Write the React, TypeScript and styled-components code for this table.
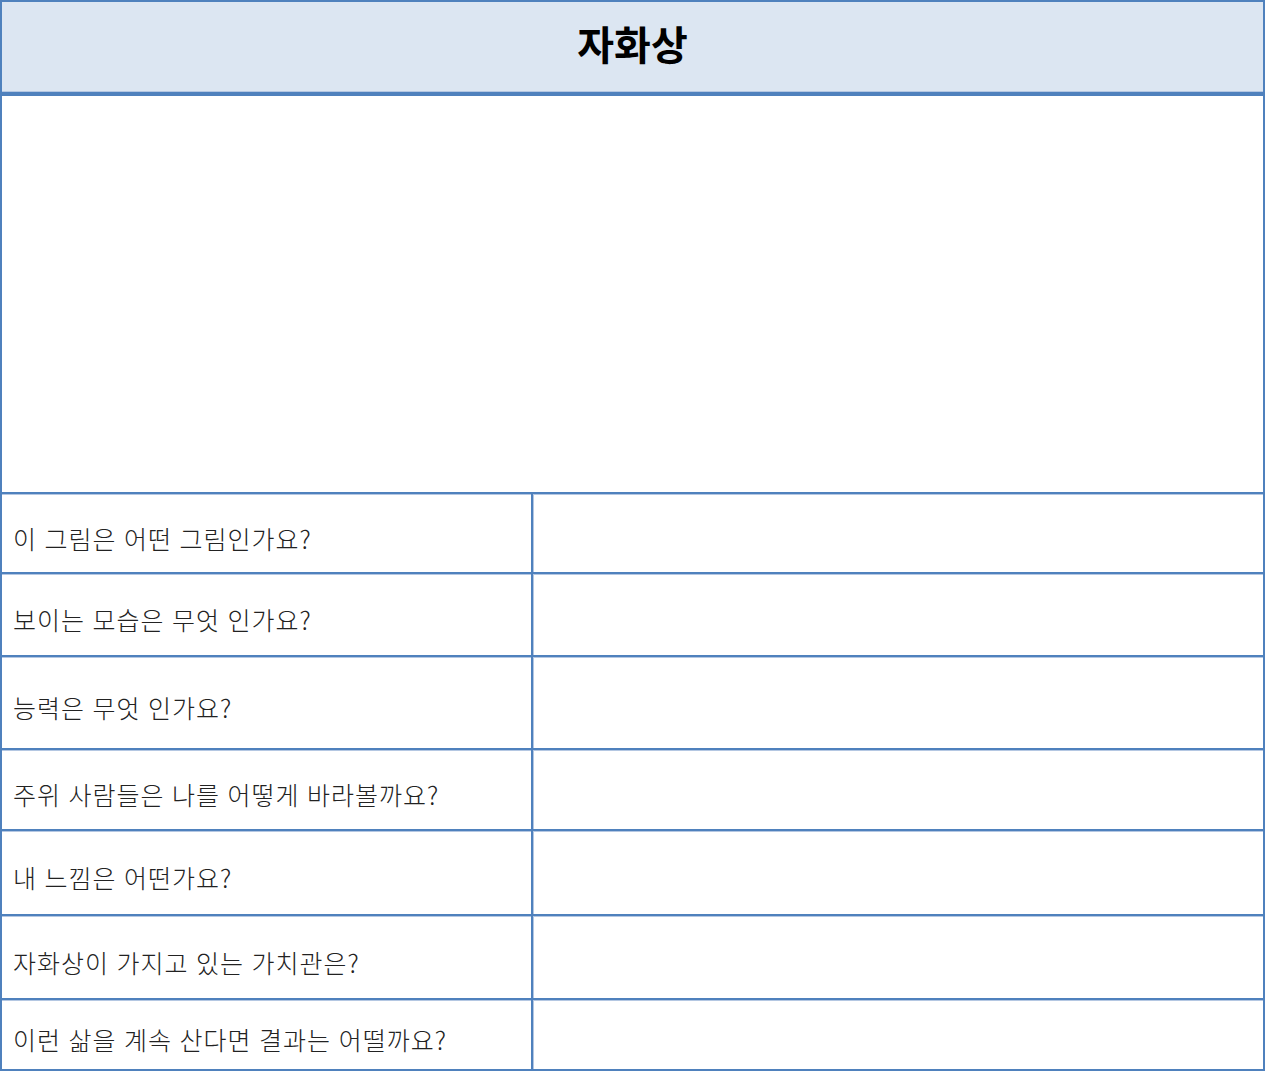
import React from 'react';
import styled, { createGlobalStyle } from 'styled-components';

const Blue = '#4f81bd';
const LightLine = '#b4c7e2';

const GlobalStyle = createGlobalStyle`
  html, body {
    margin: 0;
    padding: 0;
    background: #ffffff;
  }
  * {
    box-sizing: border-box;
  }
`;

const Sheet = styled.div`
  width: 1265px;
  height: 1071px;
  border: 2px solid ${Blue};
  display: flex;
  flex-direction: column;
  overflow: hidden;
  background: #ffffff;
  font-family: "Noto Sans CJK KR", "Noto Sans", sans-serif;
  color: #1a1a1a;
`;

const Header = styled.div`
  height: 94px;
  flex-shrink: 0;
  display: flex;
  align-items: center;
  justify-content: center;
  background: #dce6f2;
  border-bottom: 4px solid ${Blue};
  box-shadow: inset 0 -1px 0 ${LightLine};
  padding-bottom: 8px;
`;

const Title = styled.h1`
  margin: 0;
  font-size: 40px;
  font-weight: 700;
  color: #000000;
`;

const DrawingArea = styled.div`
  height: 396px;
  flex-shrink: 0;
`;

const Row = styled.div<{ $h: number }>`
  height: ${(p) => p.$h}px;
  flex-shrink: 0;
  display: grid;
  grid-template-columns: 531px 1fr;
  border-top: 2px solid ${Blue};
  box-shadow: inset 0 1px 0 ${LightLine};
`;

const Question = styled.div`
  display: flex;
  align-items: center;
  padding: 9px 0 0 11px;
  border-right: 2px solid ${Blue};
  font-size: 25px;
  font-weight: 300;
  letter-spacing: 1px;
  word-spacing: 1px;
  color: #222222;
  white-space: nowrap;
`;

const Answer = styled.div`
  box-shadow: inset 1px 0 0 ${LightLine};
`;

const questions: { text: string; h: number }[] = [
  { text: '이 그림은 어떤 그림인가요?', h: 80 },
  { text: '보이는 모습은 무엇 인가요?', h: 83 },
  { text: '능력은 무엇 인가요?', h: 93 },
  { text: '주위 사람들은 나를 어떻게 바라볼까요?', h: 81 },
  { text: '내 느낌은 어떤가요?', h: 85 },
  { text: '자화상이 가지고 있는 가치관은?', h: 84 },
  { text: '이런 삶을 계속 산다면 결과는 어떨까요?', h: 71 },
];

const App: React.FC = () => {
  return (
    <>
      <GlobalStyle />
      <Sheet>
        <Header>
          <Title>자화상</Title>
        </Header>
        <DrawingArea />
        {questions.map((q) => (
          <Row key={q.text} $h={q.h}>
            <Question>{q.text}</Question>
            <Answer />
          </Row>
        ))}
      </Sheet>
    </>
  );
};

export default App;
